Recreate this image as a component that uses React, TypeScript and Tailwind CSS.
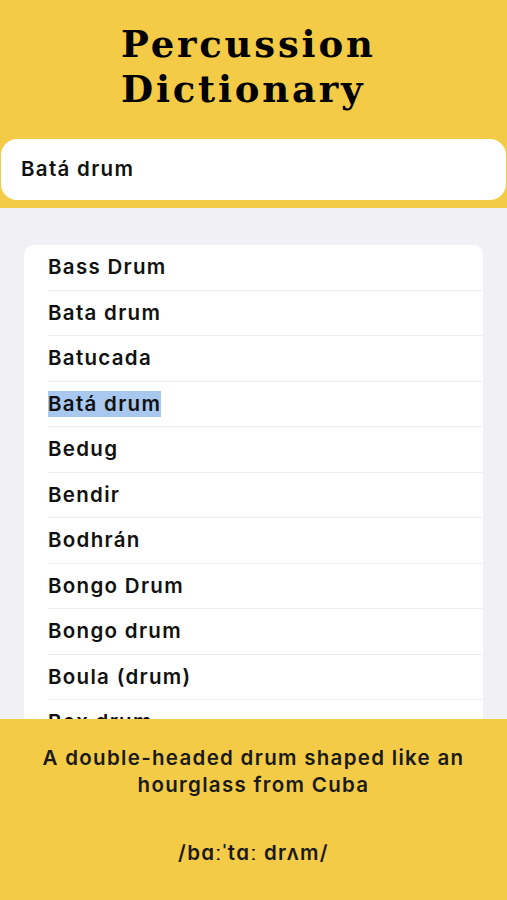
import React from "react";

const terms = [
	"Bass Drum",
	"Bata drum",
	"Batucada",
	"Batá drum",
	"Bedug",
	"Bendir",
	"Bodhrán",
	"Bongo Drum",
	"Bongo drum",
	"Boula (drum)",
	"Box drum",
	"Bugarija",
];

export default function App() {
	const selected = "Batá drum";

	return (
		<div
			className="flex flex-col w-full h-[900px] overflow-hidden bg-[#f0f0f5] tracking-[1.3px]"
			style={{ fontFamily: "Inter, 'Noto Sans', sans-serif" }}
		>
			<header className="flex flex-col h-[208px] shrink-0 bg-[#f4cb46]">
				<h1
					className="pl-[121px] pt-[22px] text-[37px] leading-[45px] font-bold tracking-[2.8px] text-black"
					style={{ fontFamily: "'DejaVu Serif', serif" }}
				>
					Percussion
					<br />
					Dictionary
				</h1>
				<div className="flex items-center h-[61px] mt-[27px] mx-[1px] px-5 bg-white rounded-[16px]">
					<span className="text-[20.5px] font-semibold text-[#111]">Batá drum</span>
				</div>
			</header>

			<main className="flex-1 min-h-0 px-6 pt-[37px] overflow-hidden">
				<ul className="bg-white rounded-[10px]">
					{terms.map((term, index) => (
						<li key={index} className="pl-6">
							<div
								className={`flex items-center h-[45.5px] ${
									index < terms.length - 1 ? "border-b border-[#ececf0]" : ""
								}`}
							>
								<span
									className={`text-[20.5px] leading-[26px] font-semibold text-[#111] ${
										term === selected ? "bg-[#a9c8f0]" : ""
									}`}
								>
									{term}
								</span>
							</div>
						</li>
					))}
				</ul>
			</main>

			<footer className="flex flex-col items-center h-[181px] shrink-0 bg-[#f4cb46] text-[#1a1a1a]">
				<p className="mt-[25px] px-6 text-center text-[20.5px] leading-[27px] font-semibold">
					A double-headed drum shaped like an hourglass from Cuba
				</p>
				<p className="mt-[40px] text-[20.5px] font-semibold">/bɑːˈtɑː drʌm/</p>
			</footer>
		</div>
	);
}
